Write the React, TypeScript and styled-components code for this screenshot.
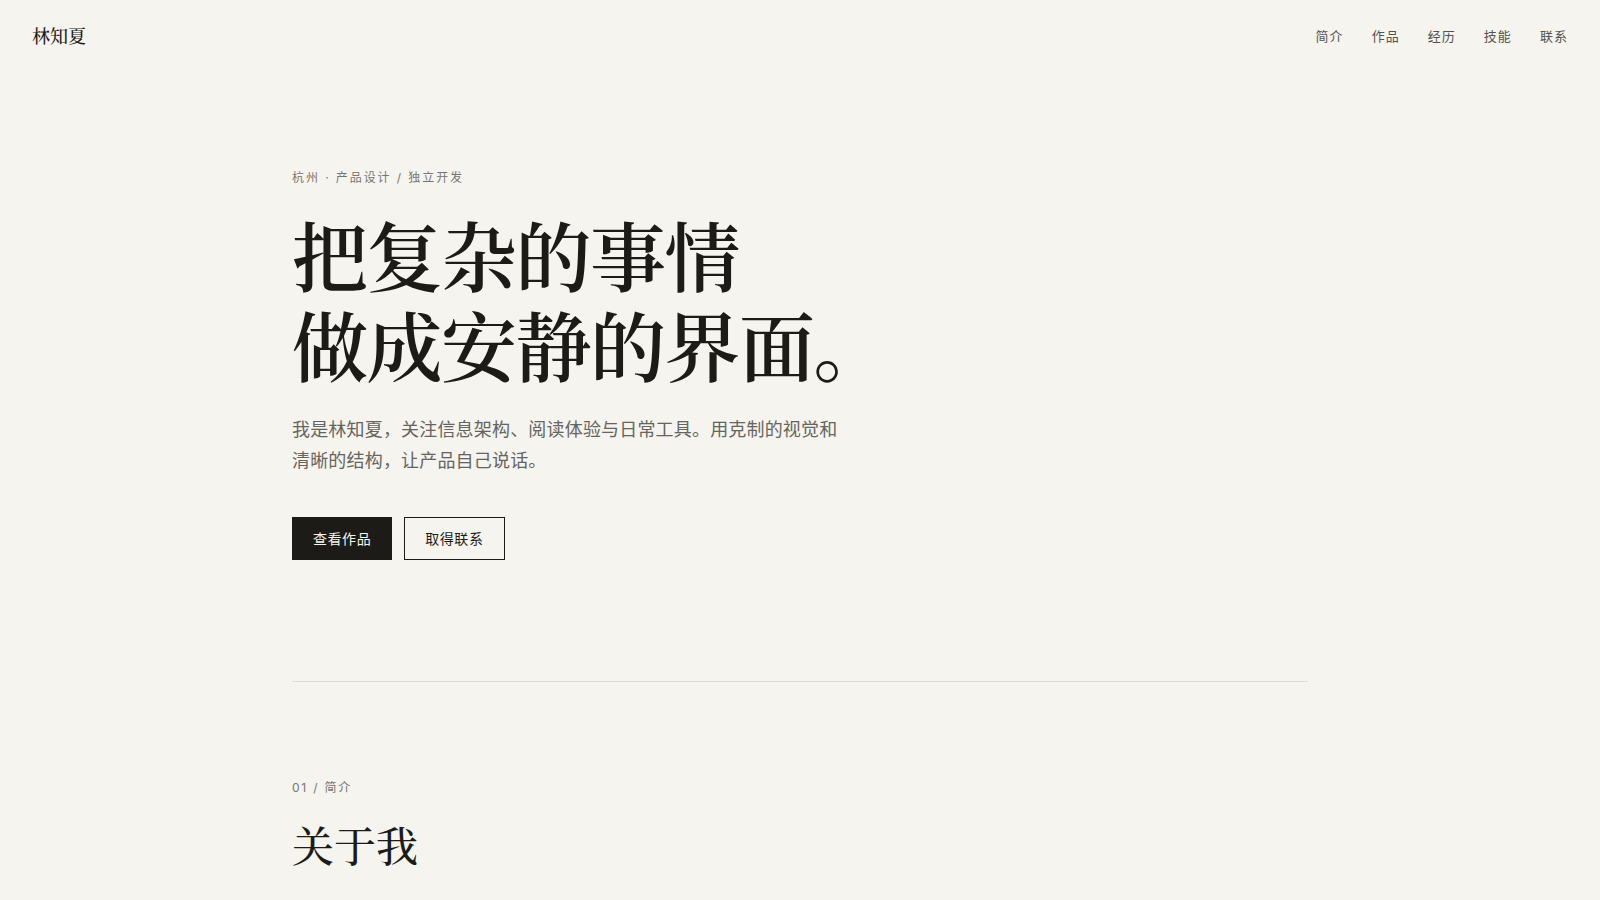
import styled, { createGlobalStyle } from 'styled-components';

const GlobalStyle = createGlobalStyle`
  * {
    box-sizing: border-box;
  }

  html,
  body {
    margin: 0;
    padding: 0;
    background: #f5f4ef;
    color: #1c1b18;
    font-family: 'Inter', 'Noto Sans CJK SC', sans-serif;
    -webkit-font-smoothing: antialiased;
  }
`;

const serif = `'Noto Serif CJK SC', 'Source Han Serif SC', 'Songti SC', 'Liberation Serif', serif`;

const Page = styled.div`
  min-height: 100vh;
  background: #f5f4ef;
`;

const Header = styled.header`
  height: 70px;
  padding: 0 32px;
  display: flex;
  align-items: center;
  justify-content: space-between;
`;

const Logo = styled.a`
  font-family: ${serif};
  font-size: 18px;
  font-weight: 500;
  color: #1c1b18;
  text-decoration: none;
`;

const Nav = styled.nav`
  display: flex;
  gap: 28px;
`;

const NavLink = styled.a`
  font-size: 13px;
  letter-spacing: 0.08em;
  color: #55534f;
  text-decoration: none;
`;

const Container = styled.div`
  max-width: 1080px;
  margin: 0 auto;
  padding: 0 32px;
`;

const Hero = styled.section`
  padding: 99px 0 121px;
  border-bottom: 1px solid #dfdcd5;
`;

const Eyebrow = styled.p`
  margin: 0 0 22px;
  font-size: 12px;
  line-height: 1.5;
  letter-spacing: 0.16em;
  color: #77756f;
`;

const Title = styled.h1`
  margin: 0 0 27px;
  font-family: ${serif};
  font-size: 76px;
  font-weight: 600;
  line-height: 1.18;
  letter-spacing: -0.02em;
  color: #1c1b18;
`;

const Lead = styled.p`
  margin: 0 0 40px;
  max-width: 548px;
  font-size: 18px;
  line-height: 1.7;
  letter-spacing: 0.01em;
  color: #66645f;
`;

const Actions = styled.div`
  display: flex;
  gap: 12px;
`;

const Button = styled.a<{ $primary?: boolean }>`
  display: inline-block;
  padding: 10px 20px;
  border: 1px solid #1c1b18;
  background: ${p => (p.$primary ? '#1c1b18' : 'transparent')};
  color: ${p => (p.$primary ? '#f5f4ef' : '#1c1b18')};
  font-size: 14px;
  line-height: 1.5;
  letter-spacing: 0.04em;
  text-decoration: none;
`;

const Section = styled.section`
  padding-top: 97px;
`;

const SectionLabel = styled.p`
  margin: 0 0 21px;
  font-size: 12px;
  line-height: 1.5;
  letter-spacing: 0.15em;
  color: #77756f;
`;

const SectionTitle = styled.h2`
  margin: 0;
  font-family: ${serif};
  font-size: 42px;
  font-weight: 500;
  line-height: 1.25;
  color: #1c1b18;
`;

const navItems = ['简介', '作品', '经历', '技能', '联系'];

export default function App() {
  return (
    <Page>
      <GlobalStyle />
      <Header>
        <Logo href="#">林知夏</Logo>
        <Nav>
          {navItems.map(item => (
            <NavLink key={item} href="#">
              {item}
            </NavLink>
          ))}
        </Nav>
      </Header>

      <Container>
        <Hero>
          <Eyebrow>杭州 · 产品设计 / 独立开发</Eyebrow>
          <Title>
            把复杂的事情
            <br />
            做成安静的界面。
          </Title>
          <Lead>
            我是林知夏，关注信息架构、阅读体验与日常工具。用克制的视觉和清晰的结构，让产品自己说话。
          </Lead>
          <Actions>
            <Button $primary href="#">
              查看作品
            </Button>
            <Button href="#">取得联系</Button>
          </Actions>
        </Hero>

        <Section>
          <SectionLabel>01 / 简介</SectionLabel>
          <SectionTitle>关于我</SectionTitle>
        </Section>
      </Container>
    </Page>
  );
}
